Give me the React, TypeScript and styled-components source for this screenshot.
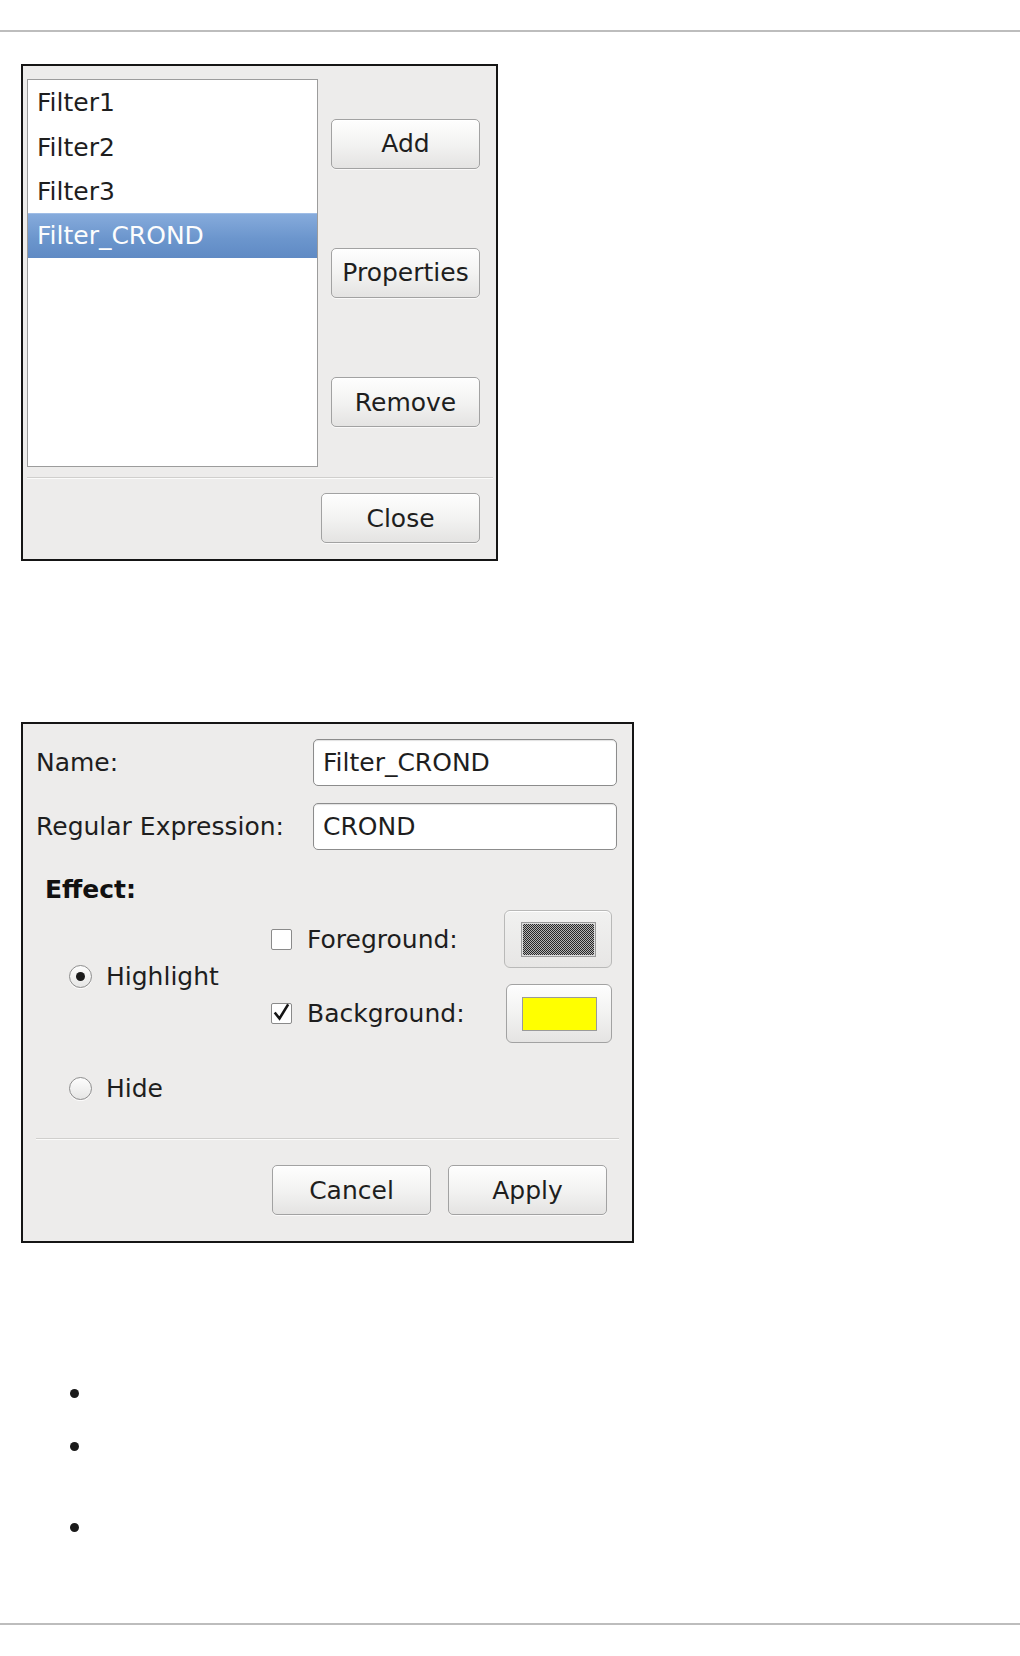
import React from "react";
import styled, { createGlobalStyle } from "styled-components";

const GlobalStyle = createGlobalStyle`
  html, body {
    margin: 0;
    padding: 0;
    background: #fff;
  }
  body {
    font-family: "DejaVu Sans", "Liberation Sans", sans-serif;
    color: #222;
  }
  * {
    box-sizing: border-box;
  }
`;

const App = () => {
    const filters = ["Filter1", "Filter2", "Filter3", "Filter_CROND"];
    const selected = "Filter_CROND";

    return (
        <Page>
            <GlobalStyle />
            <Rule />

            <Dialog $width={477} $top={32}>
                <ManagerBody>
                    <FilterList>
                        {filters.map((name) => (
                            <FilterRow key={name} $selected={name === selected}>
                                {name}
                            </FilterRow>
                        ))}
                    </FilterList>
                    <ButtonColumn>
                        <Button $width={149}>Add</Button>
                        <Button $width={149}>Properties</Button>
                        <Button $width={149}>Remove</Button>
                    </ButtonColumn>
                </ManagerBody>
                <Separator $margin="10px 3px 0 4px" />
                <Footer $padding="14px 16px 16px">
                    <Button $width={159}>Close</Button>
                </Footer>
            </Dialog>

            <Dialog $width={613} $top={161}>
                <FormBody>
                    <FieldGrid>
                        <FieldLabel>Name:</FieldLabel>
                        <TextInput readOnly value="Filter_CROND" />
                        <FieldLabel>Regular Expression:</FieldLabel>
                        <TextInput readOnly value="CROND" />
                    </FieldGrid>

                    <EffectHeading>Effect:</EffectHeading>

                    <EffectGrid>
                        <OptionCell $row="1 / span 2" $col={1}>
                            <Radio $checked />
                            <span>Highlight</span>
                        </OptionCell>
                        <OptionCell $row="3" $col={1}>
                            <Radio />
                            <span>Hide</span>
                        </OptionCell>

                        <OptionCell $row="1" $col={2} $gap={15}>
                            <Checkbox />
                            <span>Foreground:</span>
                        </OptionCell>
                        <OptionCell $row="2" $col={2} $gap={15}>
                            <Checkbox>
                                <svg width="21" height="21" viewBox="0 0 21 21">
                                    <path d="M4.5 10.5 L8.5 15.5 L16.5 2.5" fill="none" stroke="#151515" strokeWidth="2.6" strokeLinecap="square" />
                                </svg>
                            </Checkbox>
                            <span>Background:</span>
                        </OptionCell>

                        <ColorButton $row={1} $width={108} $height={58} $disabled>
                            <Swatch $stipple $h={35} />
                        </ColorButton>
                        <ColorButton $row={2} $width={106} $height={59}>
                            <Swatch $color="#ffff00" $h={34} />
                        </ColorButton>
                    </EffectGrid>
                </FormBody>

                <Separator $margin="20px 13px 0 13px" />
                <Footer $padding="25px 25px 26px">
                    <Button $width={159}>Cancel</Button>
                    <Button $width={159}>Apply</Button>
                </Footer>
            </Dialog>

            <BulletList>
                <BulletItem $lines={1}><Dot /></BulletItem>
                <BulletItem $lines={2}><Dot /></BulletItem>
                <BulletItem $lines={1}><Dot /></BulletItem>
            </BulletList>

            <Rule $top={82} />
        </Page>
    );
};

export default App;

const Page = styled.div`
    width: 1020px;
    min-height: 1656px;
    padding-top: 30px;
    overflow: hidden;
`;

const Rule = styled.div<{ $top?: number }>`
    height: 2px;
    background: #bdbdbd;
    margin-top: ${({ $top }) => $top ?? 0}px;
`;

const Dialog = styled.div<{ $width: number; $top: number }>`
    margin: ${({ $top }) => $top}px 0 0 21px;
    width: ${({ $width }) => $width}px;
    border: 2px solid #151515;
    background: #edeceb;
    font-size: 25px;
    color: #222;
`;

const ManagerBody = styled.div`
    display: flex;
    gap: 13px;
    padding: 13px 16px 0 4px;
    height: 401px;
`;

const FilterList = styled.div`
    width: 291px;
    height: 388px;
    background: #fff;
    border: 1px solid #9c9c9c;
`;

const FilterRow = styled.div<{ $selected?: boolean }>`
    height: 44.4px;
    display: flex;
    align-items: center;
    padding-left: 9px;
    color: ${({ $selected }) => ($selected ? "#fdfdfd" : "#1e1e1e")};
    background: ${({ $selected }) =>
        $selected ? "linear-gradient(#86abdc, #6c96cd 55%, #5f8ac4)" : "transparent"};
    border-top: 1px solid ${({ $selected }) => ($selected ? "#9fbde6" : "transparent")};
`;

const ButtonColumn = styled.div`
    height: 388px;
    display: flex;
    flex-direction: column;
    justify-content: space-around;
`;

const Button = styled.button<{ $width: number }>`
    width: ${({ $width }) => $width}px;
    height: 50px;
    padding: 0;
    border: 1px solid #a2a2a2;
    border-radius: 5px;
    background: linear-gradient(#fefefe, #f3f3f2 50%, #e4e3e2);
    box-shadow: inset 0 1px 0 #fff, 0 1px 0 rgba(255, 255, 255, 0.7);
    font-family: "DejaVu Sans", "Liberation Sans", sans-serif;
    font-size: 25px;
    color: #1e1e1e;
    cursor: pointer;
`;

const Separator = styled.div<{ $margin: string }>`
    margin: ${({ $margin }) => $margin};
    height: 2px;
    border-top: 1px solid #d0cfcd;
    border-bottom: 1px solid #fbfbfa;
`;

const Footer = styled.div<{ $padding: string }>`
    display: flex;
    justify-content: flex-end;
    gap: 17px;
    padding: ${({ $padding }) => $padding};
`;

const FormBody = styled.div`
    padding: 15px 15px 0 13px;
`;

const FieldGrid = styled.div`
    display: grid;
    grid-template-columns: 277px 304px;
    grid-auto-rows: 47px;
    row-gap: 17px;
    align-items: center;
`;

const FieldLabel = styled.div`
    color: #1e1e1e;
`;

const TextInput = styled.input`
    width: 304px;
    height: 47px;
    padding: 0 9px;
    border: 1px solid #8c8c8c;
    border-radius: 5px;
    background: #fff;
    box-shadow: inset 0 1px 1px rgba(0, 0, 0, 0.12);
    font-family: "DejaVu Sans", "Liberation Sans", sans-serif;
    font-size: 25px;
    color: #1e1e1e;
    outline: none;
`;

const EffectHeading = styled.div`
    margin: 25px 0 0 9px;
    line-height: 30px;
    font-weight: bold;
    color: #111;
`;

const EffectGrid = styled.div`
    margin: 5px 0 0 33px;
    display: grid;
    grid-template-columns: 202px 233px 108px;
    grid-template-rows: 58px 58px 60px;
    row-gap: 16px;
`;

const OptionCell = styled.label<{ $row: string; $col: number; $gap?: number }>`
    grid-row: ${({ $row }) => $row};
    grid-column: ${({ $col }) => $col};
    align-self: center;
    display: flex;
    align-items: center;
    gap: ${({ $gap }) => $gap ?? 14}px;
    color: #1e1e1e;
`;

const Radio = styled.span<{ $checked?: boolean }>`
    width: 23px;
    height: 23px;
    border-radius: 50%;
    border: 1px solid #8e8e8e;
    background: linear-gradient(#fdfdfd, #e6e6e5);
    box-shadow: 0 1px 0 rgba(255, 255, 255, 0.8);
    display: flex;
    align-items: center;
    justify-content: center;

    &::after {
        content: "";
        width: 9px;
        height: 9px;
        border-radius: 50%;
        background: #1c1c1c;
        display: ${({ $checked }) => ($checked ? "block" : "none")};
    }
`;

const Checkbox = styled.span`
    width: 21px;
    height: 21px;
    border: 1px solid #8a8a8a;
    border-radius: 2px;
    background: #fff;
    display: flex;
    align-items: center;
    justify-content: center;

    svg {
        margin: -1px;
        overflow: visible;
    }
`;

const ColorButton = styled.div<{ $row: number; $width: number; $height: number; $disabled?: boolean }>`
    grid-row: ${({ $row }) => $row};
    grid-column: 3;
    justify-self: end;
    align-self: start;
    width: ${({ $width }) => $width}px;
    height: ${({ $height }) => $height}px;
    border: 1px solid ${({ $disabled }) => ($disabled ? "#b9b9b8" : "#a2a2a2")};
    border-radius: 6px;
    background: ${({ $disabled }) =>
        $disabled ? "linear-gradient(#f1f1f0, #e7e6e5)" : "linear-gradient(#fefefe, #f2f2f1 50%, #e5e4e3)"};
    box-shadow: inset 0 1px 0 #fff;
    display: flex;
    align-items: center;
    justify-content: center;
`;

const Swatch = styled.div<{ $color?: string; $stipple?: boolean; $h: number }>`
    width: 75px;
    height: ${({ $h }) => $h}px;
    border: 1px solid #9a9a9a;
    background: ${({ $stipple, $color }) =>
        $stipple
            ? "repeating-conic-gradient(#262626 0 25%, #b4b4b4 0 50%) 0 0 / 2px 2px"
            : $color};
    box-shadow: inset 0 0 0 1px ${({ $stipple }) => ($stipple ? "#dcdcdc" : "#ffff00")};
`;

const BulletList = styled.ul`
    list-style: none;
    margin: 136px 0 0;
    padding: 0 0 0 70px;
`;

const BulletItem = styled.li<{ $lines: number }>`
    height: ${({ $lines }) => $lines * 28}px;
    margin-bottom: 25px;
    display: flex;
    align-items: flex-start;

    &:last-child {
        margin-bottom: 0;
    }
`;

const Dot = styled.span`
    margin-top: 9.5px;
    width: 9px;
    height: 9px;
    border-radius: 50%;
    background: #1a1a1a;
`;
